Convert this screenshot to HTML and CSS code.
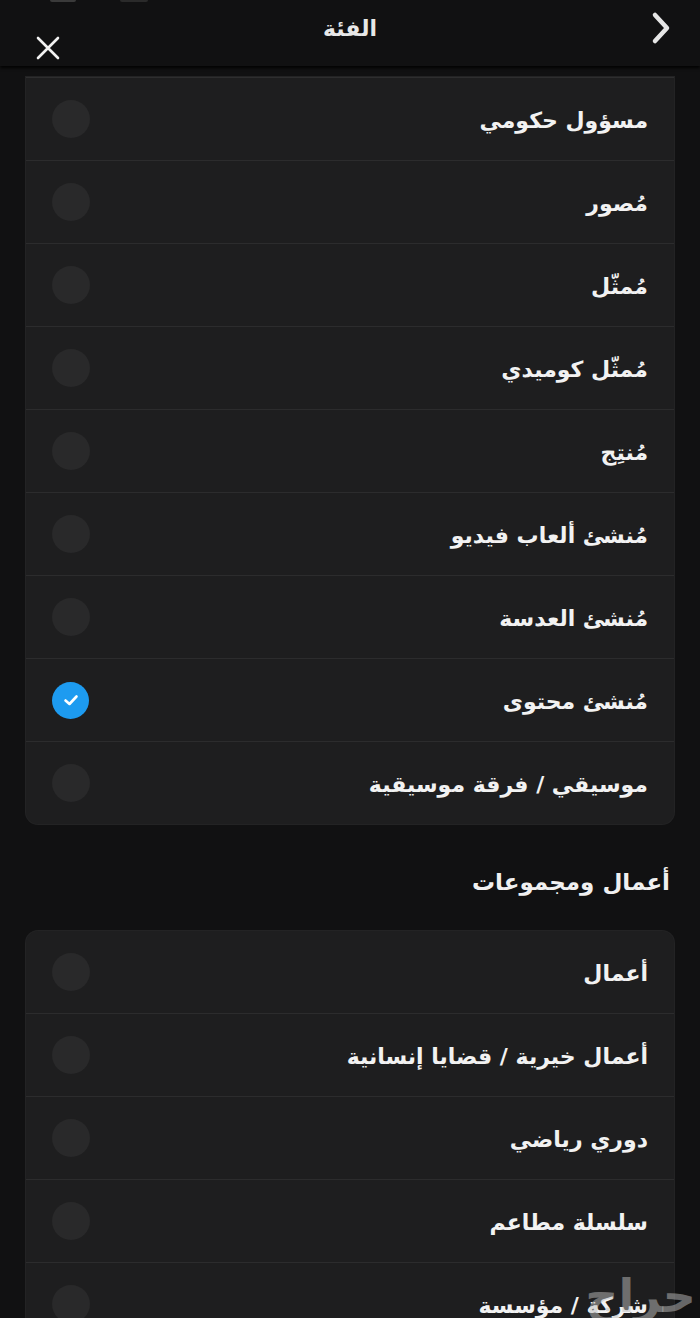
FILE: index.html
```html
<!DOCTYPE html>
<html lang="ar" dir="rtl">
<head>
<meta charset="utf-8">
<link rel="stylesheet" href="styles.css">
</head>
<body>
<div class="status"><span class="sb sb1"></span><span class="sb sb2"></span></div>
<header class="header">
  <div class="back">
    <svg width="22" height="34" viewBox="0 0 22 34"><path d="M5 4 L17 17 L5 30" fill="none" stroke="#e6e6e6" stroke-width="4.5" stroke-linecap="round" stroke-linejoin="round"/></svg>
  </div>
  <div class="title">الفئة</div>
  <div class="close">
    <svg width="26" height="26" viewBox="0 0 26 26"><path d="M3 3 L23 23 M23 3 L3 23" stroke="#f2f2f2" stroke-width="2.6" stroke-linecap="round"/></svg>
  </div>
</header>
<main class="content">
  <section class="card card-top">
    <div class="row"><span class="label">مسؤول حكومي</span><span class="radio"></span></div>
    <div class="row"><span class="label">مُصور</span><span class="radio"></span></div>
    <div class="row"><span class="label">مُمثّل</span><span class="radio"></span></div>
    <div class="row"><span class="label">مُمثّل كوميدي</span><span class="radio"></span></div>
    <div class="row"><span class="label">مُنتِج</span><span class="radio"></span></div>
    <div class="row"><span class="label">مُنشئ ألعاب فيديو</span><span class="radio"></span></div>
    <div class="row"><span class="label">مُنشئ العدسة</span><span class="radio"></span></div>
    <div class="row"><span class="label">مُنشئ محتوى</span><span class="radio checked"><svg width="20" height="20" viewBox="0 0 20 20"><path d="M4.5 10.5 L8.5 14 L15.5 6.5" fill="none" stroke="#fff" stroke-width="2.6" stroke-linecap="round" stroke-linejoin="round"/></svg></span></div>
    <div class="row"><span class="label">موسيقي / فرقة موسيقية</span><span class="radio"></span></div>
  </section>
  <h2 class="section-title">أعمال ومجموعات</h2>
  <section class="card">
    <div class="row"><span class="label">أعمال</span><span class="radio"></span></div>
    <div class="row"><span class="label">أعمال خيرية / قضايا إنسانية</span><span class="radio"></span></div>
    <div class="row"><span class="label">دوري رياضي</span><span class="radio"></span></div>
    <div class="row"><span class="label">سلسلة مطاعم</span><span class="radio"></span></div>
    <div class="row"><span class="label">شركة / مؤسسة</span><span class="radio"></span></div>
  </section>
</main>
<div class="watermark">حراج</div>
</body>
</html>
```
FILE: styles.css
```css
html, body {
  margin: 0;
  padding: 0;
  background: #111112;
  height: 1318px;
  overflow: hidden;
}
body {
  font-family: "DejaVu Sans", sans-serif;
  color: #f0f0f0;
  position: relative;
}
.status {
  position: absolute;
  top: 0;
  left: 0;
  width: 100%;
  height: 4px;
  z-index: 3;
}
.sb {
  position: absolute;
  top: 0;
  height: 2px;
  background: #3a3a3a;
  border-radius: 0 0 2px 2px;
}
.sb1 { left: 50px; width: 26px; }
.sb2 { left: 120px; width: 28px; background: #2a2a2a; }
.header {
  height: 66px;
  display: grid;
  grid-template-columns: 80px 1fr 80px;
  align-items: center;
  background: #111112;
  box-shadow: 0 2px 3px rgba(0,0,0,0.9);
  position: relative;
  z-index: 2;
}
.back {
  justify-self: start;
  padding-right: 28px;
  padding-bottom: 10px;
  display: flex;
}
.title {
  text-align: center;
  font-size: 22px;
  font-weight: bold;
  color: #e8e8e8;
  padding-bottom: 10px;
}
.close {
  justify-self: end;
  padding-left: 35px;
  align-self: end;
  padding-bottom: 5px;
  display: flex;
}
.content {
  padding: 11px 26px 0 26px;
}
.card {
  background: #1e1e1f;
  border-radius: 12px;
  overflow: hidden;
  box-shadow: 0 0 0 1px #232324;
}
.card-top {
  border-radius: 0 0 12px 12px;
  border-top: 1px solid #2e2e2f;
}
.row {
  height: 82px;
  display: flex;
  align-items: center;
  justify-content: space-between;
  padding: 0 26px 0 26px;
  border-bottom: 1px solid #2c2c2d;
}
.row:last-child {
  border-bottom: none;
}
.label {
  font-size: 22px;
  font-weight: bold;
  color: #f2f2f2;
  padding-top: 2px;
}
.radio {
  width: 38px;
  height: 38px;
  border-radius: 50%;
  background: #29292a;
  display: flex;
  align-items: center;
  justify-content: center;
}
.radio.checked {
  background: #1d9bf0;
  width: 37px;
  height: 37px;
}
.section-title {
  margin: 0;
  height: 107px;
  display: flex;
  align-items: center;
  padding-right: 4px;
  padding-top: 8px;
  box-sizing: border-box;
  font-size: 23px;
  font-weight: bold;
  color: #f0f0f0;
}
.watermark {
  position: absolute;
  right: 4px;
  bottom: -6px;
  font-size: 46px;
  line-height: 1.2;
  font-weight: bold;
  color: rgba(190,190,190,0.5);
  z-index: 4;
}
```
